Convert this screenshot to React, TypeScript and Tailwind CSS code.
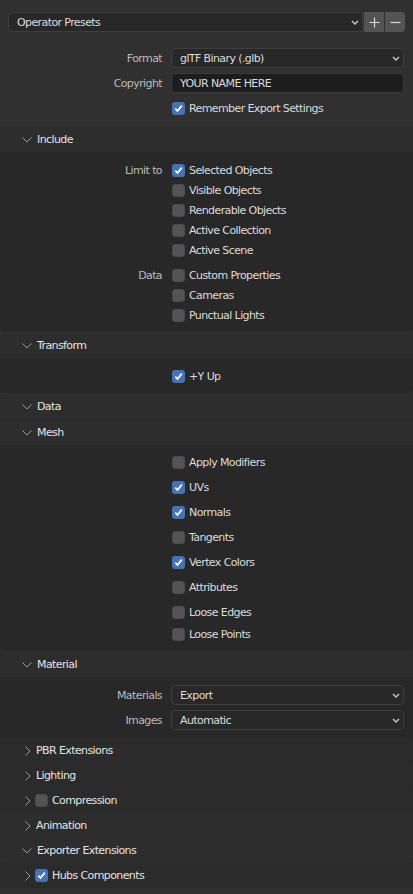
import type { ReactNode } from "react";

function ChevronDown() {
  return (
    <svg width="10" height="6" viewBox="0 0 10 6" className="shrink-0">
      <polyline points="0.5,0.5 5,5 9.5,0.5" fill="none" stroke="#9b9b9b" strokeWidth="1" />
    </svg>
  );
}

function ChevronRight() {
  return (
    <svg width="6" height="10" viewBox="0 0 6 10" className="shrink-0">
      <polyline points="0.5,0.5 5,5 0.5,9.5" fill="none" stroke="#9b9b9b" strokeWidth="1" />
    </svg>
  );
}

function SelectArrow() {
  return (
    <svg width="8" height="5" viewBox="0 0 8 5" className="shrink-0">
      <polyline points="1,1 4,4 7,1" fill="none" stroke="#c8c8c8" strokeWidth="1.4" />
    </svg>
  );
}

function Check({ on }: { on?: boolean }) {
  return (
    <div
      className={
        on
          ? "w-[13px] h-[13px] rounded-[3px] bg-[#4772b3] flex items-center justify-center shrink-0"
          : "w-[13px] h-[13px] rounded-[3px] bg-[#545454] border border-[#4a4a4a] shrink-0"
      }
    >
      {on && (
        <svg width="11" height="11" viewBox="0 0 11 11">
          <path d="M2.3 5.6 L4.5 8 L8.8 2.6" fill="none" stroke="#ffffff" strokeWidth="1.7" />
        </svg>
      )}
    </div>
  );
}

function Field({ label, children }: { label?: string; children: ReactNode }) {
  return (
    <div className="flex items-center h-5">
      <div className="w-[162px] text-right text-[#bcbcbc]">{label}</div>
      <div className="ml-[9px] mr-[9px] flex-1 h-5">{children}</div>
    </div>
  );
}

function Option({ label, text, on }: { label?: string; text: string; on?: boolean }) {
  return (
    <div className="flex items-center h-5">
      <div className="w-[162px] text-right text-[#bcbcbc]">{label}</div>
      <div className="ml-[10px] flex items-center gap-[4px] text-[#dcdcdc]">
        <Check on={on} />
        <span>{text}</span>
      </div>
    </div>
  );
}

function Select({ value }: { value: string }) {
  return (
    <div className="h-5 rounded-[4px] bg-[#282828] border border-[#3e3e3e] flex items-center pl-2 pr-[3px] text-[#dcdcdc]">
      <span className="flex-1">{value}</span>
      <SelectArrow />
    </div>
  );
}

function Header({ title }: { title: string }) {
  return (
    <div className="h-[25px] bg-[#2d2d2d] flex items-center pl-[22px] gap-[5px] text-[#e4e4e4]">
      <ChevronDown />
      <span>{title}</span>
    </div>
  );
}

function SubHeader({ title, check, on }: { title: string; check?: boolean; on?: boolean }) {
  return (
    <div className="h-[25px] bg-[#2b2b2b] rounded-[3px] flex items-center pl-[25px] text-[#e4e4e4]">
      <ChevronRight />
      {check ? (
        <div className="ml-[4px] flex items-center gap-[4px]">
          <Check on={on} />
          <span>{title}</span>
        </div>
      ) : (
        <span className="ml-[5px]">{title}</span>
      )}
    </div>
  );
}

function App() {
  return (
    <div className="w-[413px] h-[894px] bg-[#303030] overflow-hidden font-['DejaVu_Sans',sans-serif] text-[11px] leading-none tracking-[-0.6px]">
      <div className="pt-3 px-2">
        <div className="flex h-5">
          <div className="flex-1 rounded-l-[4px] bg-[#282828] border border-[#3e3e3e] flex items-center pl-2 pr-[3px] text-[#dcdcdc]">
            <span className="flex-1">Operator Presets</span>
            <SelectArrow />
          </div>
          <div className="w-5 ml-px bg-[#545454] flex items-center justify-center">
            <svg width="11" height="11" viewBox="0 0 11 11">
              <path d="M5.5 0.5 V10.5 M0.5 5.5 H10.5" stroke="#dadada" strokeWidth="1.2" />
            </svg>
          </div>
          <div className="w-5 ml-px rounded-r-[4px] bg-[#545454] flex items-center justify-center">
            <svg width="11" height="11" viewBox="0 0 11 11">
              <path d="M0.5 5.5 H10.5" stroke="#dadada" strokeWidth="1.2" />
            </svg>
          </div>
        </div>
      </div>

      <div className="mt-4 flex flex-col gap-[5px] pb-[9px]">
        <Field label="Format">
          <Select value="glTF Binary (.glb)" />
        </Field>
        <Field label="Copyright">
          <div className="h-5 rounded-[4px] bg-[#1d1d1d] border border-[#3a3a3a] flex items-center pl-2 text-[#dcdcdc]">
            YOUR NAME HERE
          </div>
        </Field>
        <Option text="Remember Export Settings" on />
      </div>

      <Header title="Include" />
      <div className="bg-[#282828] rounded-b-[4px] pt-2 pb-[7px]">
        <Option label="Limit to" text="Selected Objects" on />
        <Option text="Visible Objects" />
        <Option text="Renderable Objects" />
        <Option text="Active Collection" />
        <Option text="Active Scene" />
        <div className="h-[5px]" />
        <Option label="Data" text="Custom Properties" />
        <Option text="Cameras" />
        <Option text="Punctual Lights" />
      </div>

      <div className="h-px" />
      <Header title="Transform" />
      <div className="bg-[#282828] rounded-b-[4px] pt-2 pb-[7px]">
        <Option text="+Y Up" on />
      </div>

      <div className="h-px" />
      <Header title="Data" />
      <div className="border-t border-[#2a2a2a]">
        <Header title="Mesh" />
      </div>
      <div className="bg-[#282828] rounded-b-[4px] pt-[7px] pb-[7px] flex flex-col">
        <div className="flex flex-col gap-[5px]">
          <Option text="Apply Modifiers" />
          <Option text="UVs" on />
          <Option text="Normals" on />
          <Option text="Tangents" />
          <Option text="Vertex Colors" on />
          <Option text="Attributes" />
          <Option text="Loose Edges" />
        </div>
        <div className="mt-[2px]">
          <Option text="Loose Points" />
        </div>
      </div>

      <div className="h-px" />
      <Header title="Material" />
      <div className="bg-[#282828] rounded-b-[4px] pt-2">
        <div className="flex flex-col gap-[5px]">
          <Field label="Materials">
            <Select value="Export" />
          </Field>
          <Field label="Images">
            <Select value="Automatic" />
          </Field>
        </div>
        <div className="mt-2">
          <SubHeader title="PBR Extensions" />
          <SubHeader title="Lighting" />
          <SubHeader title="Compression" check />
        </div>
      </div>

      <div className="h-[25px] bg-[#2d2d2d] flex items-center pl-[25px] gap-[5px] text-[#e4e4e4]">
        <ChevronRight />
        <span>Animation</span>
      </div>
      <Header title="Exporter Extensions" />
      <div className="bg-[#282828] rounded-b-[4px]">
        <SubHeader title="Hubs Components" check on />
      </div>
    </div>
  );
}

export default App;
